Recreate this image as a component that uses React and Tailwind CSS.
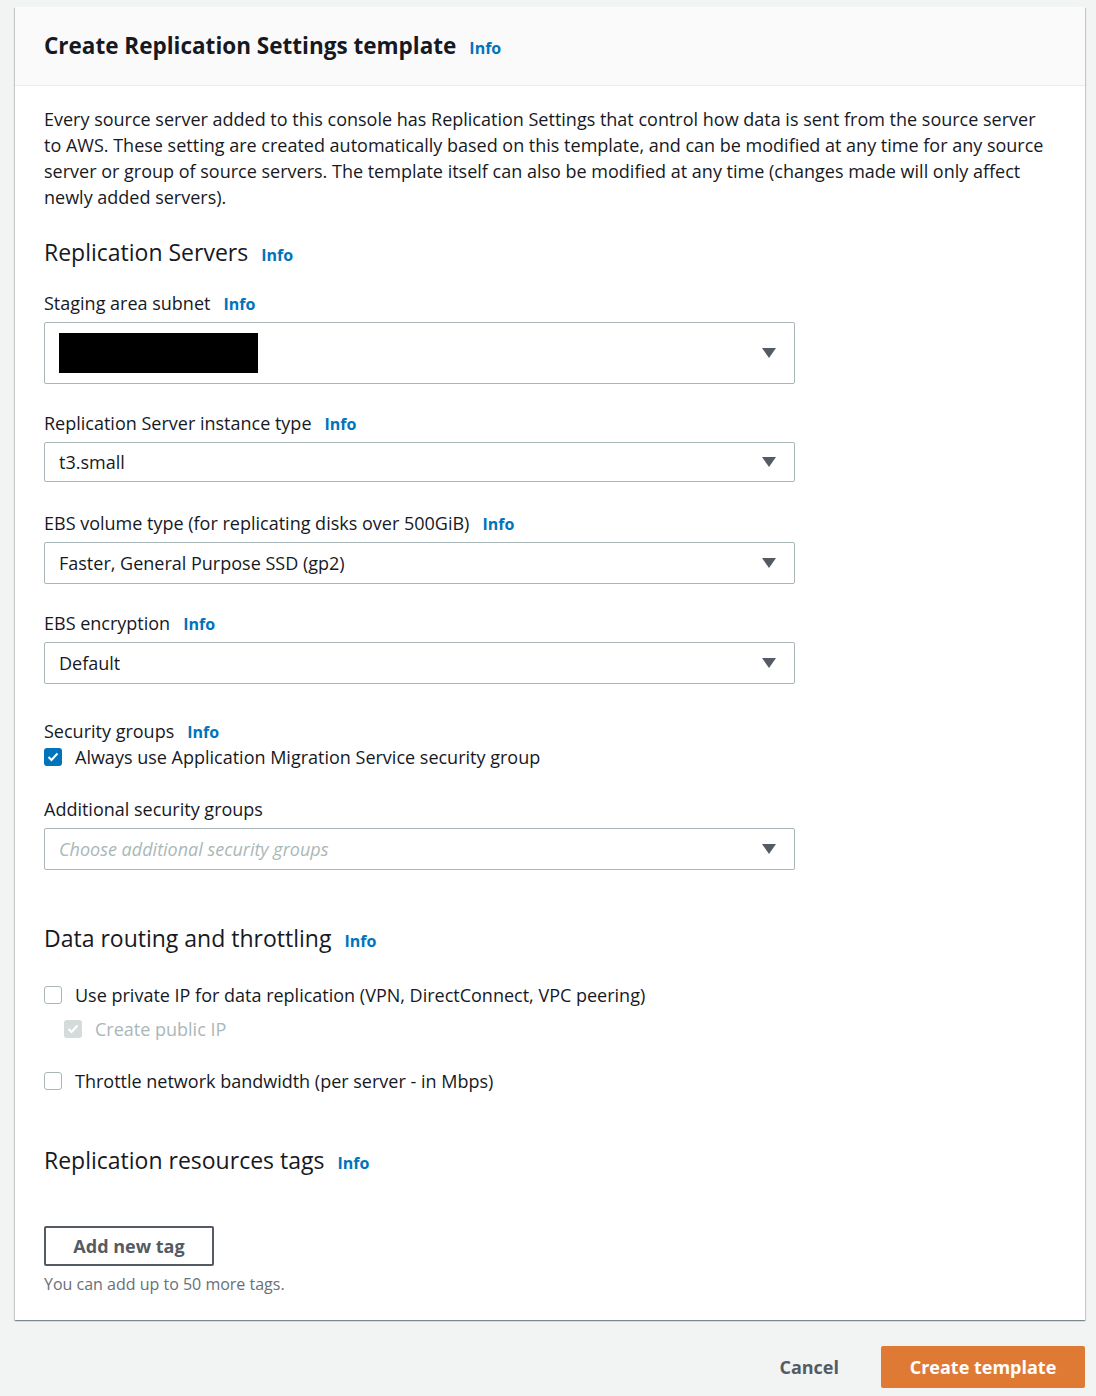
const font = { fontFamily: '"Open Sans", "Noto Sans", Arial, sans-serif' };

const Info = () => (
  <span className="ml-[13px] text-[16px] leading-[20px] font-bold text-[#0073bb]">Info</span>
);

const Caret = () => (
  <svg width="14" height="10" viewBox="0 0 14 10" className="shrink-0">
    <path d="M0 0 H14 L7 10 Z" fill="#545b64" />
  </svg>
);

const Select = ({ children, className = '' }) => (
  <div
    className={`flex w-[751px] items-center justify-between rounded-[2px] border border-[#aab7b8] bg-white pl-[14px] pr-[18px] ${className}`}
  >
    <div className="flex-1">{children}</div>
    <Caret />
  </div>
);

const Label = ({ children, info = true, className = '' }) => (
  <div className={`flex items-baseline text-[18px] leading-[24px] text-[#16191f] ${className}`}>
    {children}
    {info && <Info />}
  </div>
);

const Heading = ({ children, className = '' }) => (
  <div className={`flex items-baseline text-[23px] leading-[30px] text-[#16191f] ${className}`}>
    {children}
    <Info />
  </div>
);

const Checkbox = ({ checked, disabled }) => {
  if (disabled || checked) {
    return (
      <span
        className={`flex h-[18px] w-[18px] items-center justify-center rounded-[3px] ${disabled ? 'bg-[#d5dbdb]' : 'bg-[#0073bb]'}`}
      >
        <svg width="12" height="10" viewBox="0 0 12 10">
          <path d="M1.5 5 L4.5 8 L10.5 1.5" stroke="white" strokeWidth="2" fill="none" />
        </svg>
      </span>
    );
  }
  return <span className="h-[18px] w-[18px] rounded-[3px] border border-[#aab7b8] bg-white" />;
};

const CheckRow = ({ checked, disabled, children, className = '' }) => (
  <div
    className={`flex items-center gap-[13px] text-[18px] leading-[24px] ${disabled ? 'text-[#aab7b8]' : 'text-[#16191f]'} ${className}`}
  >
    <Checkbox checked={checked} disabled={disabled} />
    <span>{children}</span>
  </div>
);

export default function App() {
  return (
    <div className="min-h-[1396px] bg-[#f2f3f3] pt-[7px] pl-[15px]" style={font}>
      <div className="w-[1070px] bg-white shadow-[0_1px_1px_0_rgba(0,28,36,0.3),1px_1px_1px_0_rgba(0,28,36,0.15),-1px_1px_1px_0_rgba(0,28,36,0.15)]">
        <div className="flex h-[79px] items-center border-b border-[#eaeded] bg-[#fafafa] px-[29px]">
          <div className="flex items-baseline">
            <h1 className="text-[22.5px] leading-[30px] font-bold text-[#16191f]">Create Replication Settings template</h1>
            <Info />
          </div>
        </div>

        <div className="px-[29px] pt-[20px] pb-[26px]">
          <p className="w-[1005px] text-[18px] leading-[26px] text-[#16191f]">
            Every source server added to this console has Replication Settings that control how data is sent from the source server
            to AWS. These setting are created automatically based on this template, and can be modified at any time for any source
            server or group of source servers. The template itself can also be modified at any time (changes made will only affect
            newly added servers).
          </p>

          <Heading className="mt-[27px]">Replication Servers</Heading>

          <Label className="mt-[24px]">Staging area subnet</Label>
          <Select className="mt-[7px] h-[62px]">
            <div className="h-[40px] w-[199px] bg-black" />
          </Select>

          <Label className="mt-[27px]">Replication Server instance type</Label>
          <Select className="mt-[7px] h-[40px]">
            <span className="text-[18px] text-[#16191f]">t3.small</span>
          </Select>

          <Label className="mt-[29px]">EBS volume type (for replicating disks over 500GiB)</Label>
          <Select className="mt-[7px] h-[42px]">
            <span className="text-[18px] text-[#16191f]">Faster, General Purpose SSD (gp2)</span>
          </Select>

          <Label className="mt-[27px]">EBS encryption</Label>
          <Select className="mt-[7px] h-[42px]">
            <span className="text-[18px] text-[#16191f]">Default</span>
          </Select>

          <Label className="mt-[35px]">Security groups</Label>
          <CheckRow checked className="mt-[2px]">Always use Application Migration Service security group</CheckRow>

          <Label info={false} className="mt-[28px]">Additional security groups</Label>
          <Select className="mt-[7px] h-[42px]">
            <span className="text-[18px] italic text-[#aab7b8]">Choose additional security groups</span>
          </Select>

          <Heading className="mt-[53px]">Data routing and throttling</Heading>

          <CheckRow className="mt-[30px]">Use private IP for data replication (VPN, DirectConnect, VPC peering)</CheckRow>
          <CheckRow disabled className="mt-[10px] ml-[20px]">Create public IP</CheckRow>
          <CheckRow className="mt-[28px]">Throttle network bandwidth (per server - in Mbps)</CheckRow>

          <Heading className="mt-[52px]">Replication resources tags</Heading>

          <button className="mt-[51px] h-[40px] w-[170px] rounded-[2px] border-2 border-[#545b64] bg-white text-[18px] font-bold text-[#545b64]">
            Add new tag
          </button>
          <p className="mt-[8px] text-[16px] leading-[20px] text-[#687078]">You can add up to 50 more tags.</p>
        </div>
      </div>

      <div className="mt-[26px] flex w-[1070px] items-center justify-end">
        <button className="mr-[42px] text-[18px] font-bold text-[#545b64]">Cancel</button>
        <button className="h-[42px] w-[204px] rounded-[2px] bg-[#df7a35] text-[18px] font-bold text-white">
          Create template
        </button>
      </div>
    </div>
  );
}
